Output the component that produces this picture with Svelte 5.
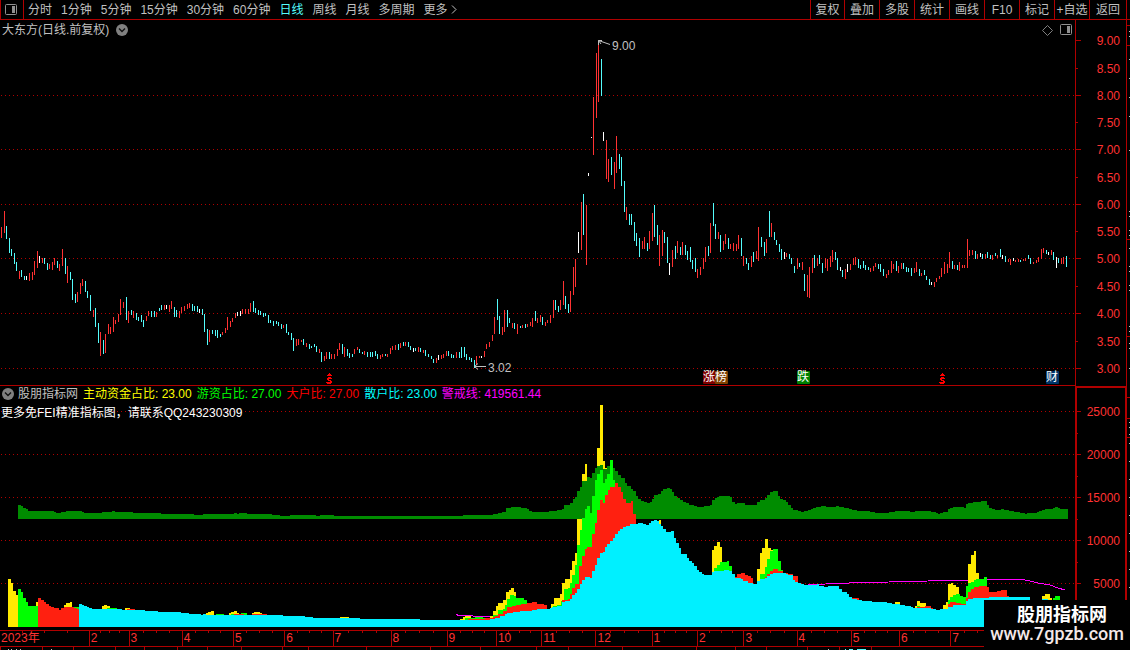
<script lang="ts">
  const periods = ['分时', '1分钟', '5分钟', '15分钟', '30分钟', '60分钟', '日线', '周线', '月线', '多周期', '更多'];
  const tools = ['复权', '叠加', '多股', '统计', '画线', 'F10', '标记', '+自选', '返回'];
  let period = $state('日线');

  const W = 1075;
  const STEP = 2.5418;

  // r = up, c = down, w = flat; high-low in chart units
  const raw = `
r227-238 r211-233 c226-239 c238-253 c249-256 c253-264 c262-271 r271-279 c270-277 c276-280
w276-280 r273-281 r272-280 r261-275 r251-268 w256-263 r258-263 c258-264 c263-270 r264-269
r262-270 r258-265 c261-268 r264-271 r249-266 c258-274 r266-283 c272-280 c279-300 c294-303
r292-302 r283-294 r279-286 c281-292 c291-298 c295-311 r310-317 c308-327 c323-343 r332-356
c340-354 r334-353 r324-334 r327-334 r317-332 r320-324 r314-322 r299-315 r302-308 c297-320
r311-323 c310-315 r311-318 c313-320 c317-321 c315-322 c320-327 r316-321 r311-316 c311-317
c311-317 r312-317 c308-311 c305-310 r305-310 w305-309 r305-312 r301-309 c307-317 c310-317
r311-318 r307-313 r306-311 r304-309 r303-308 c304-311 c306-311 c306-312 w309-313 c309-315
c314-332 c329-345 r330-342 c330-334 c330-336 c330-338 c334-337 r332-335 r328-333 r317-330
r321-327 r318-322 r313-318 w312-316 w311-316 r309-314 r309-314 r309-314 r303-312 c301-312
c308-313 c310-315 c311-315 c313-317 c313-316 c315-323 c320-323 c321-326 c321-324 c322-326
c324-329 r325-328 c324-333 c332-335 c333-340 c338-351 r339-346 r339-345 r340-342 c339-345
r343-347 c344-349 c346-348 c344-347 c346-352 r349-353 c352-362 r356-361 r352-359 c352-359
r354-359 r354-359 r349-356 r343-350 c344-354 r347-357 c349-356 c353-358 c354-357 r349-354
r347-350 c349-353 c352-354 r351-355 c352-357 c352-357 c352-357 c351-356 c354-359 r355-359
r354-357 c354-356 r354-357 r348-354 r346-350 r345-350 c344-350 r343-348 c342-346 r342-346
c342-347 c346-350 w348-352 c348-351 r347-352 c348-352 r350-353 c350-356 c354-357 c356-359
c359-363 r358-363 w355-360 r355-359 r354-358 r351-356 c351-356 c354-358 c355-358 r352-358
c352-358 c347-358 c347-357 c354-360 c357-360 c358-362 c360-368 r356-365 r356-358 w356-358
r351-357 r344-349 r342-347 r335-341 r317-334 c299-320 c316-334 r327-335 r310-332 c310-327
c318-323 r323-328 c323-329 r324-334 c326-328 r325-328 c324-328 r324-327 r322-326 r318-327
c311-321 r318-323 r315-322 c317-325 r322-326 r320-323 r315-323 r300-318 c300-310 c306-312
r300-310 r281-305 c296-309 c304-313 r291-312 r267-295 r259-287 w232-253 r202-250 c194-235
r205-265 w173-176 w137-138 r97-155 r53-118 r43-102 c59-96 w132-141 r140-179 r159-182
c157-175 r162-189 r136-173 c154-169 c157-186 c181-212 r207-220 c214-225 c214-225 c222-241
c233-246 c238-257 r241-249 r237-249 c243-251 r231-249 r213-241 c205-237 c225-245 r235-266
r230-256 c232-243 c237-263 w263-275 r250-267 c246-259 r241-253 c247-255 r242-255 c245-255
c251-260 c247-262 c260-269 c258-272 r269-278 r267-275 r258-269 r247-262 c246-256 r223-253
c203-226 c224-239 r232-239 c235-252 r241-250 r234-244 c238-249 r244-249 r243-251 r244-251
r235-249 c238-256 r256-266 c258-264 c263-270 r256-267 c252-262 r251-259 r227-261 c237-247
c242-256 r239-253 c211-237 r223-237 c232-240 c240-245 c244-252 c249-260 w252-259 r253-257
c254-259 c258-264 c266-273 r258-269 c263-267 r262-270 c274-291 r275-297 r267-298 r258-273
c255-268 r258-266 c255-264 c263-273 r258-268 r259-271 r256-267 r250-262 c252-260 c258-270
w267-271 c270-277 r269-279 w264-272 r264-270 r258-265 r257-265 c259-268 c265-269 c261-268
c265-270 c267-270 r268-272 r266-271 r263-267 c264-269 c264-272 c269-276 r274-278 r270-275
r261-273 r264-269 c261-271 r266-273 r263-269 c263-269 c267-272 c268-272 c268-276 r268-273
r262-272 c269-276 r273-276 c270-275 c276-280 c279-285 w282-285 r282-287 r278-282 r276-279
r268-277 r262-274 r264-273 r252-268 c261-269 r265-269 c265-270 r262-271 r265-268 r265-268
r239-268 r250-256 r250-255 c251-259 r254-259 w253-257 c254-259 r254-259 c252-258 c255-259
r255-260 c253-256 r255-258 c249-257 w255-259 c256-262 r259-262 r259-265 w258-261 r260-262
r259-262 c260-262 r259-261 r258-261 c255-259 c258-264 r262-264 r260-263 r257-262 r249-259
r248-253 c250-254 w252-255 r250-255 c252-260 w257-268 c258-263 r258-264 r257-264 c256-267`;

  const candles = raw.trim().split(/\s+/).map((s, i) => {
    const [top, bottom] = s.slice(1).split('-').map(Number);
    return { x: Math.round(1 + i * STEP), top, bottom, kind: s[0] };
  });

  // stepped areas: "x:top", top 627 = empty
  const main = `8:579 11:583 13:591 16:595 18:627 36:602 38:627 64:605 66:603 70:602 72:627 102:606 104:605 107:606
110:627 125:608 130:627 206:613 208:612 211:611 214:627 229:613 231:612 234:611 237:613 239:627 252:613 254:612
260:613 262:627 340:617 349:627 460:619 463:617 465:616 471:627 490:616 493:611 496:606 498:603 503:600 506:592
509:590 511:588 514:592 516:627 551:604 554:598 560:594 562:583 565:579 570:570 572:561 575:553 577:518 582:474
585:464 587:519 597:448 600:405 603:461 605:468 607:627 659:520 661:627 712:550 714:546 717:542 720:547 722:627
757:569 760:553 762:548 765:539 768:548 771:550 773:627 895:602 900:627 915:606 917:601 920:603 926:627 943:605
946:602 948:584 951:583 953:585 956:587 959:627 968:564 971:555 974:551 976:573 979:627 1042:596 1045:594
1050:598 1052:627`;
  const hot = `18:589 21:592 23:598 26:602 28:606 38:627 74:607 79:627 107:608 117:627 119:609 122:627 216:614 224:627
231:614 234:627 241:613 247:627 465:618 475:617 483:618 493:615 498:610 503:609 505:605 507:599 510:595 514:596
516:598 524:600 527:627 553:606 557:605 561:601 564:589 568:588 570:583 572:575 575:565 577:545 580:530 582:518
585:509 587:506 590:513 592:496 595:480 597:474 600:470 603:483 605:479 607:474 610:460 613:480 615:627 714:568
717:565 720:562 727:561 729:566 732:627 760:574 765:567 767:559 770:551 773:549 778:561 781:570 783:627 917:606
920:627 948:600 950:597 953:595 956:594 960:596 963:597 966:586 968:583 971:582 974:580 976:579 984:577 987:627
1053:598 1055:596 1060:627`;
  const big = `38:598 41:600 44:602 46:604 49:606 51:607 54:608 59:610 61:608 64:607 74:608 77:609 79:627 127:609 135:627
234:614 244:627 252:614 267:627 468:619 485:618 493:617 495:616 498:614 503:611 507:607 512:606 516:605 521:604
527:603 532:602 537:604 544:605 547:627 562:600 568:599 570:594 572:588 575:584 579:566 582:556 585:549 587:547
592:534 595:523 597:510 600:500 603:503 605:495 608:490 610:487 615:483 618:487 621:492 623:499 626:503 631:501
633:514 636:627 735:577 737:574 741:573 745:575 748:576 751:578 753:627 765:577 767:574 770:571 773:569 778:571
783:573 788:574 793:576 798:627 852:598 859:627 917:607 925:606 931:608 933:627 940:609 948:604 950:602 956:603
961:604 966:598 968:592 971:589 974:587 979:586 987:587 989:592 997:591 1001:590 1007:596 1009:627`;
  const small = `79:604 82:605 84:606 87:607 89:608 92:609 122:610 145:611 158:612 181:613 189:614 201:615 203:614 206:615
283:616 305:617 313:618 360:619 420:620 490:619 495:618 500:616 505:614 507:613 513:612 520:611 532:610 537:609
550:608 552:607 557:606 562:602 565:601 570:599 572:595 575:593 577:589 580:584 582:580 585:577 590:578 592:571
595:565 597:558 600:553 603:552 605:547 607:544 610:541 613:538 615:534 618:531 620:529 623:527 626:526 630:524
638:523 643:524 646:525 649:523 651:521 654:520 657:521 659:524 661:526 663:529 666:532 671:531 674:538 676:543
679:548 681:554 687:558 689:561 692:563 694:566 697:570 699:572 702:574 704:575 712:572 714:571 724:570 729:571
732:574 735:578 741:579 743:581 748:583 753:584 757:581 760:579 765:578 767:576 770:574 773:573 786:574 788:575
793:580 795:582 798:583 801:584 804:585 817:584 819:586 824:587 828:586 839:589 842:592 847:594 849:597 852:599
857:600 862:601 872:602 887:603 892:604 900:605 905:606 911:607 913:608 931:609 936:610 940:609 948:607 953:605
966:601 968:599 973:598 989:597 1021:597 1030:601 1042:599 1048:601 1068:627`;
  const band = `18:505 21:506 23:508 26:509 28:511 54:512 56:513 61:512 66:511 82:512 84:513 102:512 112:511 115:512 133:513
161:514 194:515 203:514 234:513 237:514 239:513 247:514 272:515 280:516 290:515 316:516 320:515 334:516 463:515
493:514 498:513 502:512 506:508 511:507 521:508 527:509 529:511 532:512 549:511 557:510 562:509 564:505 570:503
573:499 575:497 577:491 580:487 582:481 587:477 590:478 592:473 595:468 597:466 600:465 603:469 607:466 613:468
615:471 618:475 621:478 625:483 627:486 631:489 633:491 636:496 638:499 641:501 644:502 647:503 650:502 652:499
654:495 658:494 661:491 663:489 667:488 670:489 672:492 674:496 677:498 680:500 683:502 686:503 689:505 694:506
697:507 704:506 710:505 712:500 715:498 717:497 719:496 730:497 732:502 735:504 737:503 745:505 757:502 760:500
765:498 767:495 770:492 773:491 778:496 780:499 783:500 786:502 788:505 791:508 793:510 798:511 801:512 804:511
808:510 811:509 813:508 816:507 821:506 826:507 836:506 839:507 844:508 849:509 852:510 857:511 870:512 875:513
889:512 895:511 910:512 915:511 931:512 936:513 938:514 940:513 943:512 948:509 950:508 953:507 964:508 966:504
968:503 973:502 981:501 987:505 989:508 992:509 995:510 1001:509 1004:510 1009:511 1014:512 1020:513 1025:514
1027:513 1037:512 1039:511 1042:510 1045:509 1053:508 1055:507 1058:508 1060:509 1068:519`;

  function area(data: string, base: number) {
    const pts = data.split(/\s+/).map((p) => p.split(':').map(Number));
    return `M${pts[0][0]} ${base}` + pts.map(([x, y]) => `H${x}V${y}`).join('') + `V${base}Z`;
  }

  const layers = [
    { cls: 'main', d: area(main, 627) },
    { cls: 'band', d: area(band, 519) },
    { cls: 'hot', d: area(hot, 627) },
    { cls: 'big', d: area(big, 627) },
    { cls: 'small', d: area(small, 627) }
  ];

  const prices = [40, 68, 95, 122, 149, 177, 204, 231, 258, 286, 313, 341, 368].map((y, i) => ({
    y,
    text: (9 - i * 0.5).toFixed(2),
    major: i % 2 === 0
  }));
  const volumes = [411, 454, 497, 540, 583].map((y, i) => ({ y, text: String(25000 - i * 5000) }));

  const legend = [
    { cls: 'yellow', name: '主动资金占比', value: '23.00' },
    { cls: 'lime', name: '游资占比', value: '27.00' },
    { cls: 'red', name: '大户比', value: '27.00' },
    { cls: 'cyan', name: '散户比', value: '23.00' },
    { cls: 'magenta', name: '警戒线', value: '419561.44' }
  ];

  const starts = [0, 91, 130, 183, 234, 285, 333, 391, 447, 496, 541, 595, 651, 696, 742, 795, 849, 897, 948, 1000];
  const names = ['2023年', '2', '3', '4', '5', '6', '7', '8', '9', '10', '11', '12', '1', '2', '3', '4', '5', '6', '7', ''];
  const months = names.map((name, i) => ({ name, span: (starts[i + 1] ?? 1130) - starts[i] }));

  const badges = [
    { x: 703, cls: 'rise', text: '涨' },
    { x: 715, cls: 'board', text: '榜' },
    { x: 797, cls: 'fall', text: '跌' },
    { x: 1046, cls: 'report', text: '财' }
  ];
  const pct = (x: number) => (x / W) * 100 + '%';
</script>

{#snippet panelIcon()}
  <svg class="panel-icon" width="12" height="12" viewBox="0 0 12 12">
    <rect x="0.5" y="0.5" width="11" height="10" rx="1" fill="none" stroke="#909090" />
    <rect x="7" y="2" width="3" height="7" fill="#909090" />
  </svg>
{/snippet}

{#snippet chevron()}
  <svg width="12" height="12" viewBox="0 0 12 12">
    <circle cx="6" cy="6" r="6" fill="#808080" />
    <path d="M3 4.5L6 7.5L9 4.5" fill="none" stroke="#111" stroke-width="1.4" />
  </svg>
{/snippet}

<div class="app">
  <header>
    <button class="toggle" aria-label="侧栏">{@render panelIcon()}</button>
    <nav>
      {#each periods as p}
        <button class:active={p === period} onclick={() => (period = p)}>{p}</button>
      {/each}
      <svg class="more" width="6" height="9" viewBox="0 0 6 9"><path d="M1 0.5L5 4.5L1 8.5" fill="none" stroke="#c0c0c0" /></svg>
    </nav>
    <div class="tools">
      {#each tools as t}
        <button>{t}</button>
      {/each}
    </div>
  </header>

  <section class="row">
    <div class="plot">
      <svg class="chart price" viewBox="0 20 {W} 365" preserveAspectRatio="none">
        {#each prices.filter((p) => p.major && p.y > 40) as p}
          <line class="grid" x1="1" x2={W} y1={p.y + 0.5} y2={p.y + 0.5} />
        {/each}
        {#each candles as c}
          <rect class={c.kind} x={c.x} y={c.top} width="1" height={c.bottom - c.top} />
        {/each}
      </svg>

      <div class="title">
        <span>大东方(日线.前复权)</span>
        <button aria-label="菜单">{@render chevron()}</button>
        <span class="spacer"></span>
        <svg width="11" height="11" viewBox="0 0 11 11"><path d="M5.5 0.5L10.5 5.5L5.5 10.5L0.5 5.5Z" fill="none" stroke="#808080" /></svg>
        <button aria-label="面板">{@render panelIcon()}</button>
      </div>

      <div class="note high" style:left={pct(598)}>
        <svg width="12" height="8" viewBox="0 0 12 8"><path d="M0.5 6V1.5H4M0.5 1.5L12 5.5M0.5 1.5L3 5" fill="none" stroke="#c0c0c0" /></svg>
        9.00
      </div>
      <div class="note low" style:left={pct(474)}>
        <svg width="12" height="8" viewBox="0 0 12 8"><path d="M0.5 3.5H12M4 0.5L0.5 3.5L4 6.5" fill="none" stroke="#c0c0c0" /></svg>
        3.02
      </div>

      {#each [326, 939] as x}
        <svg class="dividend" style:left={pct(x)} width="7" height="11" viewBox="0 0 7 11">
          <path d="M3 0H4V1H5V2H6V3H1V2H2V1H3ZM2 4H5V5H6V6H3V7H5V8H6V10H5V11H1V10H0V9H4V8H2V7H1V5H2Z" fill="#f00" />
        </svg>
      {/each}
      {#each badges as b}
        <span class="badge {b.cls}" style:left={pct(b.x)}>{b.text}</span>
      {/each}
    </div>
    <svg class="axis" width="52" height="366" viewBox="0 20 52 366">
      <path class="frame" d="M0.5 20V386M51.5 20V386" />
      {#each prices as p}
        <line class="tick" x1="1" x2={p.major ? 6 : 3} y1={p.y + 0.5} y2={p.y + 0.5} />
        <text x="45" y={p.y + 5} text-anchor="end">{p.text}</text>
      {/each}
    </svg>
    <svg class="edge" width="3" height="366" viewBox="0 20 3 366">
      <path class="frame" d="M0 25.5H3M0 45.5H3M0 239.5H3M0 336.5H3" />
      <path class="dots" d="M2.5 31V38M2.5 59V60M2.5 78V79M2.5 97V98M2.5 116V117M2.5 150V151M2.5 211V218M2.5 230V237M2.5 248V249M2.5 266V272M2.5 285V291M2.5 326V334M2.5 343V349M2.5 368V369" />
    </svg>
  </section>

  <section class="row lower">
    <div class="plot">
      <svg class="chart funds" viewBox="0 386 {W} 244" preserveAspectRatio="none">
        {#each volumes as v}
          <line class="grid" x1="1" x2={W} y1={v.y + 0.5} y2={v.y + 0.5} />
        {/each}
        <polyline class="warn" points="456,614.5 459,615.5 473,616 482,616.5 492,617" />
        <polyline class="warn" points="808,584.5 826,584 849,583 889,582 928,581 968,580.5 987,579.5 1022,579.5 1030,581 1038,583 1050,585 1058,588 1065,590" />
        {#each layers as l}
          <path class={l.cls} d={l.d} />
        {/each}
      </svg>
      <div class="legend">
        <button aria-label="指标菜单">{@render chevron()}</button>
        <span>股朋指标网</span>
        {#each legend as l}
          <span class={l.cls}>{l.name}: {l.value}</span>
        {/each}
      </div>
      <p class="contact">更多免FEI精准指标图，请联系QQ243230309</p>
    </div>
    <svg class="axis" width="52" height="244" viewBox="0 386 52 244">
      <path class="frame" d="M1 630V387H51V630" stroke-width="2" />
      {#each volumes as v}
        <line class="tick" x1="1" x2="6" y1={v.y + 0.5} y2={v.y + 0.5} />
        <line class="tick" x1="1" x2="3" y1={v.y + 22.5} y2={v.y + 22.5} />
        <text x="45" y={v.y + 5} text-anchor="end">{v.text}</text>
      {/each}
    </svg>
    <svg class="edge" width="3" height="244" viewBox="0 386 3 244">
      <path class="frame" d="M0 397.5H3M0 418.5H3M0 437.5H3" />
      <path class="dots" d="M2.5 422V423M2.5 427V428M2.5 434V435M2.5 443V444M2.5 461V462M2.5 479V480M2.5 497V498M2.5 515V516M2.5 533V534M2.5 551V552M2.5 569V570M2.5 587V588" />
    </svg>
  </section>

  <div class="months">
    {#each months as m}
      <div class="month" style:flex-grow={m.span}>{m.name}<i></i><i></i><i></i></div>
    {/each}
  </div>
  <svg class="chart next" viewBox="0 647 1130 3" preserveAspectRatio="none">
    <path class="frame" d="M0.5 647V650M42.5 647V650M73.5 647V650M115.5 647V650M144.5 647V650M177.5 647V650M207.5 647V650M241.5 647V650M282.5 647V650M308.5 647V650M366.5 647V650M430.5 647V650M480.5 647V650M536.5 647V650M568.5 647V650M622.5 647V650M696.5 647V650M735.5 647V650M766.5 647V650M807.5 647V650M839.5 647V650M871.5 647V650" />
    <path class="dots" d="M8 649.5H9M11 649.5H12M16 649.5H17M20 649.5H21M51 649.5H52M828 649.5H829" />
    <path class="down" d="M845 649.5H846M849 649.5H853M857 649.5H866" />
  </svg>

  <div class="watermark">
    <strong>股朋指标网</strong>
    <span>www.7gpzb.com</span>
  </div>
</div>

<style>
  :global(body) {
    background: #000;
    overflow: hidden;
  }
  .app {
    position: relative;
    color: #c0c0c0;
    font: 12px/14px 'Liberation Sans', 'Noto Sans CJK SC', sans-serif;
  }
  button {
    padding: 0;
    border: 0;
    background: none;
    color: inherit;
    font: inherit;
    white-space: nowrap;
    cursor: pointer;
  }
  svg {
    display: block;
    flex: none;
  }

  header {
    display: flex;
    height: 19px;
    border-bottom: 1px solid #b00000;
  }
  .toggle {
    width: 24px;
    padding-left: 4px;
    border: solid #b00000;
    border-width: 0 1px;
  }
  nav {
    flex: 1;
    display: flex;
    align-items: center;
    gap: 9px;
    padding-left: 4px;
  }
  .active {
    color: #54fcfc;
  }
  .more {
    margin-left: -6px;
  }
  .tools {
    display: flex;
    margin-right: 3px;
    border-right: 1px solid #b00000;
  }
  .tools button {
    width: 35px;
    border-left: 1px solid #b00000;
  }
  .tools button:first-child {
    width: 34px;
  }
  .tools button:last-child {
    width: 37px;
  }

  .row {
    display: flex;
  }
  .plot {
    position: relative;
    flex: 1;
    min-width: 0;
    border-bottom: 1px solid #b00000;
  }
  .lower .plot {
    border-bottom: 0;
  }
  .chart {
    width: 100%;
    shape-rendering: crispEdges;
  }
  .price {
    height: 365px;
  }
  .funds {
    height: 244px;
  }
  .next {
    height: 3px;
  }
  .grid {
    stroke: #b00000;
    stroke-dasharray: 1 3;
  }
  .r { fill: #ff3232; }
  .c { fill: #54fcfc; }
  .w { fill: #fff; }

  .main { fill: #ffea00; }
  .band { fill: #008c00; }
  .hot { fill: #00ff00; }
  .big { fill: #ff2010; }
  .small { fill: #00f0ff; }
  .warn {
    fill: none;
    stroke: #f0f;
  }

  .axis,
  .edge,
  .dividend {
    shape-rendering: crispEdges;
  }
  .axis text {
    fill: #ff3232;
  }
  .frame,
  .tick {
    fill: none;
    stroke: #b00000;
  }
  .dots {
    stroke: #c0c0c0;
    stroke-dasharray: 1 4;
  }
  .down {
    stroke: #54fcfc;
  }

  .title {
    position: absolute;
    top: 3px;
    left: 2px;
    right: 3px;
    display: flex;
    align-items: center;
    gap: 7px;
  }
  .spacer {
    flex: 1;
  }
  .note {
    position: absolute;
    display: flex;
    gap: 2px;
  }
  .high { top: 19px; }
  .low { top: 341px; }
  .low svg { margin-top: 2px; }
  .dividend {
    position: absolute;
    bottom: 1px;
  }
  .badge {
    position: absolute;
    bottom: 1px;
    width: 13px;
    height: 13px;
    line-height: 13px;
    color: #fff;
    border-radius: 1px;
  }
  .rise { background: #800000; }
  .board { background: #804000; }
  .fall { background: #008000; }
  .report { background: #003468; }

  .legend {
    position: absolute;
    top: 1px;
    left: 2px;
    display: flex;
    align-items: center;
    gap: 5px;
    white-space: nowrap;
  }
  .legend button {
    margin-right: -1px;
  }
  .yellow { color: #ff0; }
  .lime { color: #0f0; }
  .red { color: #f00; }
  .cyan { color: #0ff; }
  .magenta { color: #f0f; }
  .contact {
    position: absolute;
    top: 20px;
    left: 1px;
    margin: 0;
    color: #fff;
  }

  .months {
    display: flex;
    height: 15px;
    border: solid #b00000;
    border-width: 1px 0;
    color: #ff3232;
    line-height: 15px;
  }
  .month {
    position: relative;
    flex: 1 1 0;
    min-width: 0;
    padding-left: 1px;
    box-sizing: border-box;
    border-left: 1px solid #b00000;
    white-space: nowrap;
  }
  .month:first-child {
    border-left: 0;
  }
  .month i {
    position: absolute;
    top: 0;
    left: 25%;
    width: 1px;
    height: 2px;
    background: #b00000;
  }
  .month i:nth-child(2) { left: 50%; }
  .month i:nth-child(3) { left: 75%; }

  .watermark {
    position: absolute;
    right: 0;
    bottom: 0;
    display: flex;
    flex-direction: column;
    align-items: flex-end;
    justify-content: center;
    box-sizing: border-box;
    width: 146px;
    height: 50px;
    padding: 0 6px 2px 0;
    background: #000;
    color: #fff;
  }
  .watermark strong {
    margin-right: 17px;
    font-size: 18px;
    line-height: 20px;
  }
  .watermark span {
    font: 500 18px/18px Roboto, sans-serif;
    color: #f4e8e8;
  }
</style>
